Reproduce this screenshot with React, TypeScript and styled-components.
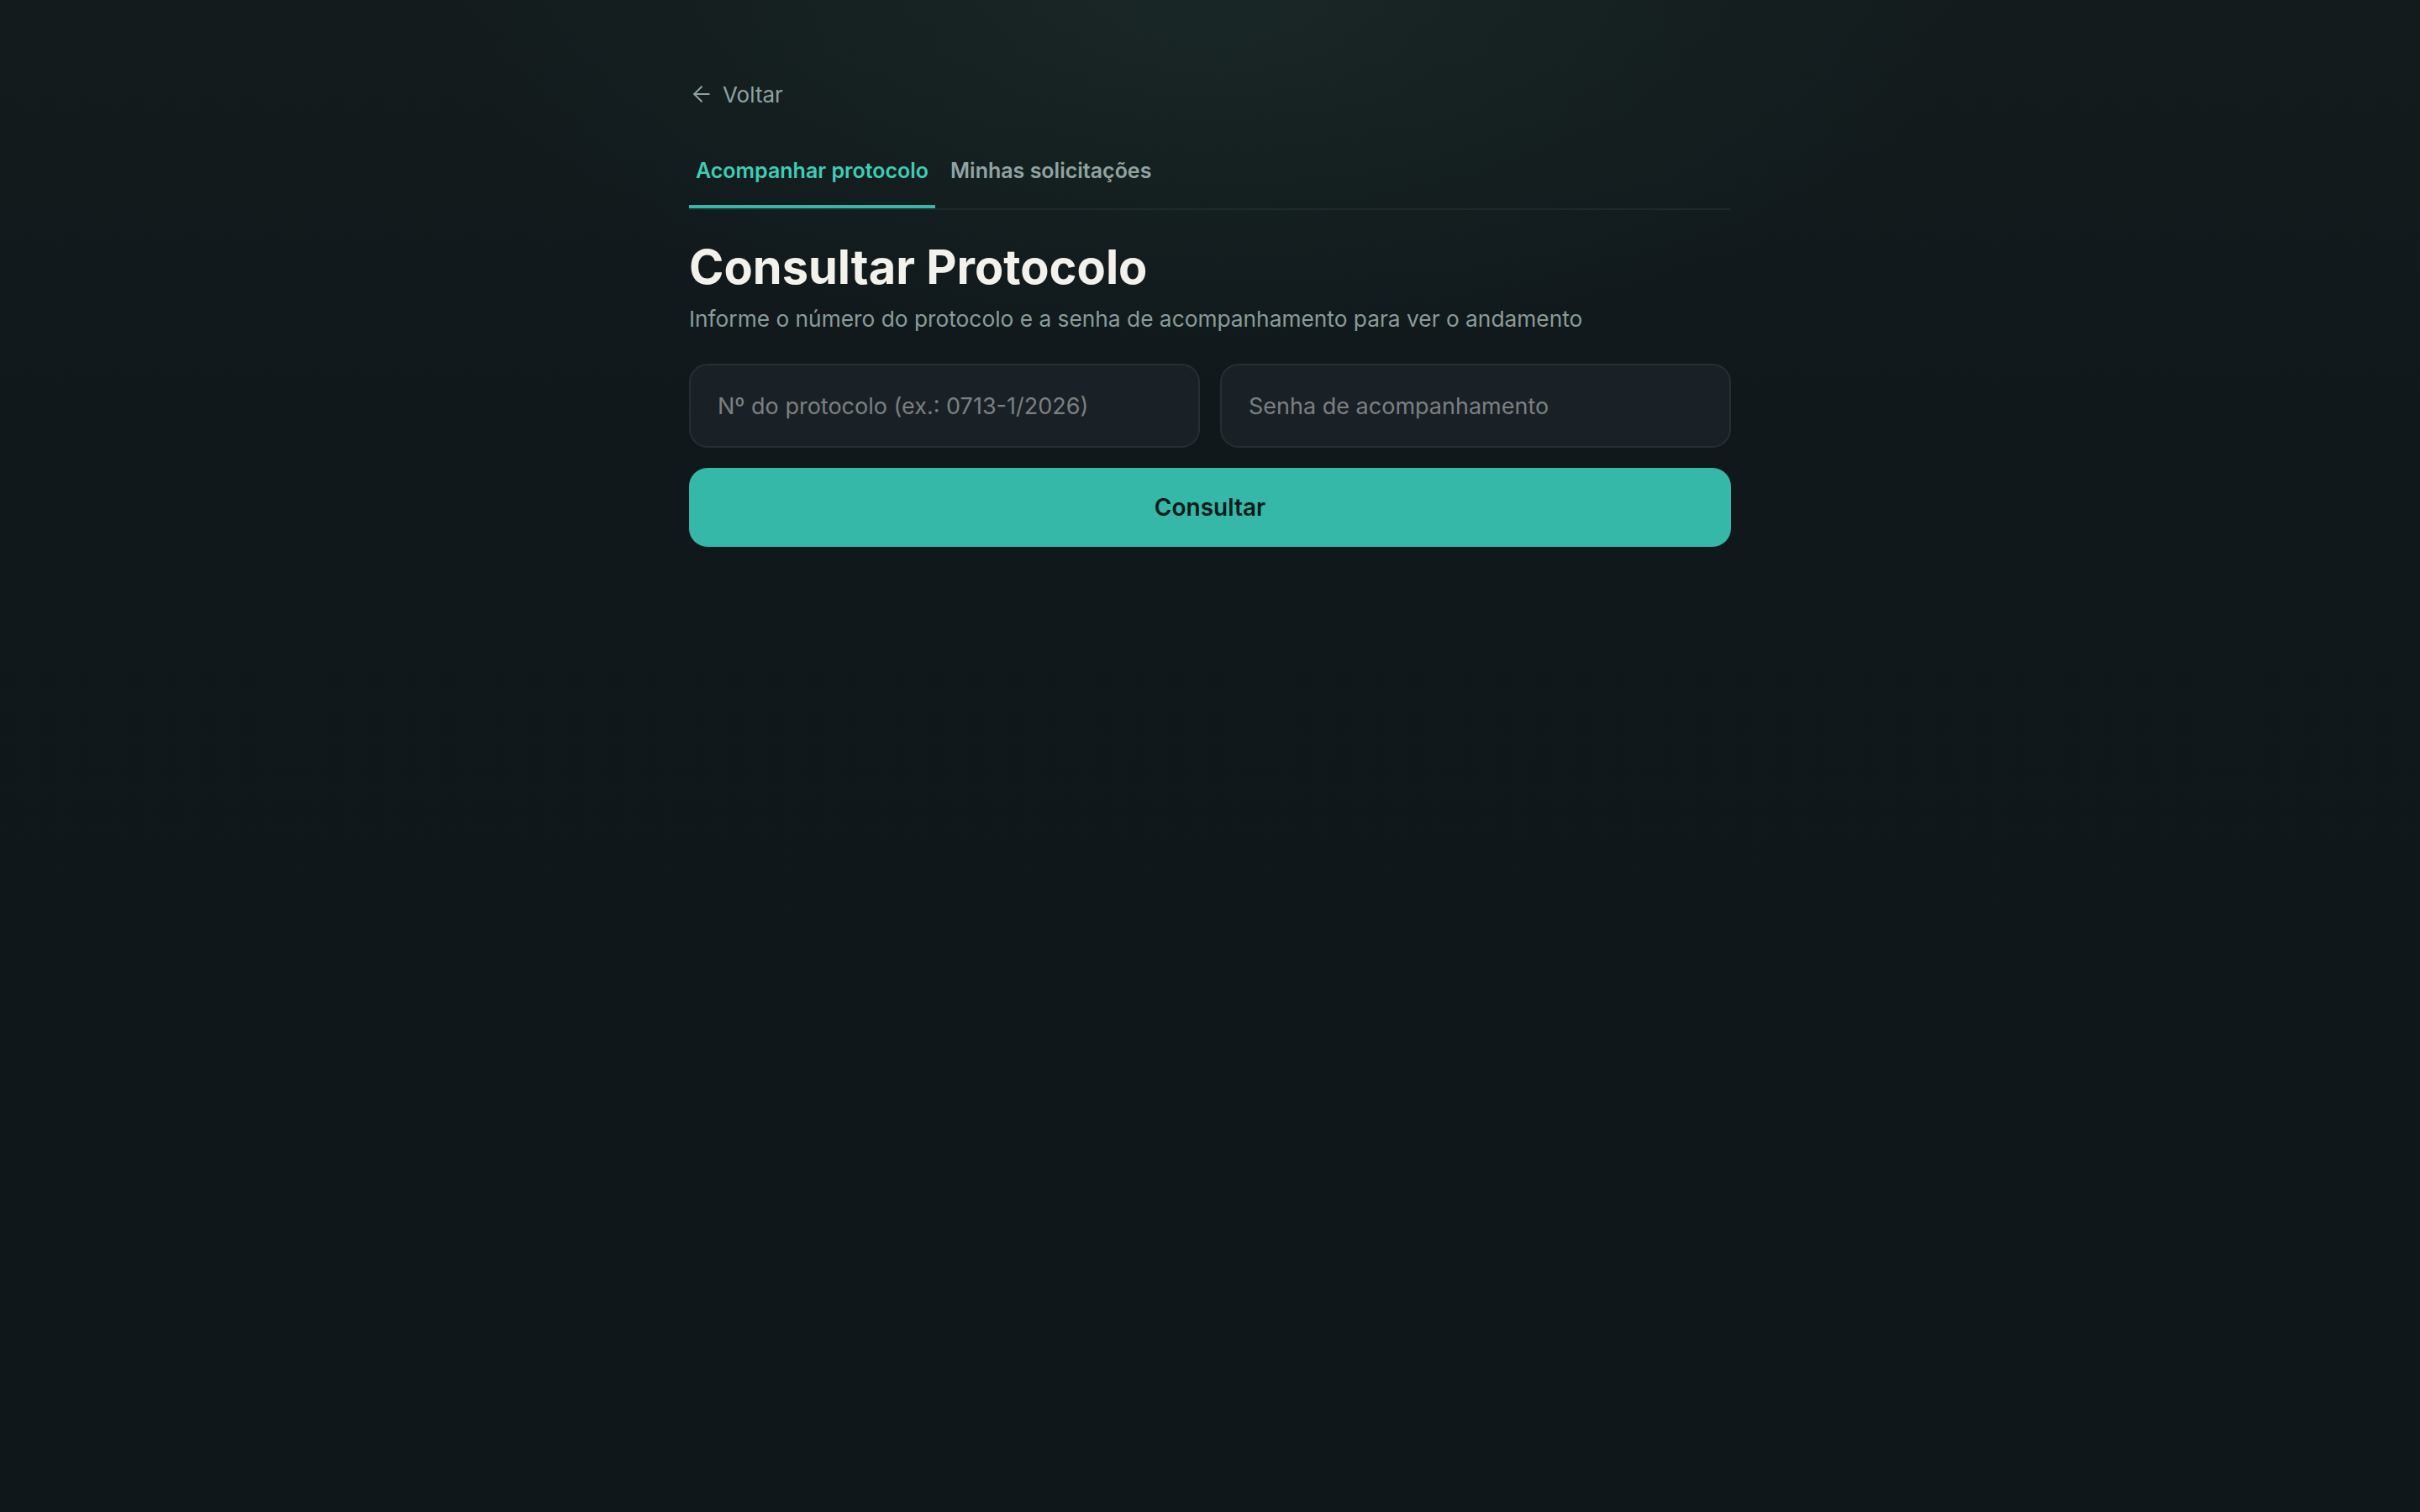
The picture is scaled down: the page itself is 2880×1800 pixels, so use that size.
import React from "react";
import styled, { createGlobalStyle } from "styled-components";
import { ArrowLeft } from "lucide-react";

const GlobalStyle = createGlobalStyle`
  html, body {
    margin: 0;
    padding: 0;
    min-height: 100%;
    background: #0f171a;
  }
  body {
    font-family: Inter, "Noto Sans", "Liberation Sans", sans-serif;
    -webkit-font-smoothing: antialiased;
  }
  * { box-sizing: border-box; }
`;

const Page = styled.div`
  min-height: 1800px;
  background:
    radial-gradient(ellipse 900px 420px at 50% 0%, rgba(40, 70, 60, 0.28), rgba(40, 70, 60, 0) 100%),
    linear-gradient(180deg, #131b1d 0%, #10181b 30%, #0f171a 100%);
  display: flex;
  justify-content: center;
`;

const Container = styled.main`
  width: 1240px;
  padding-top: 92px;
  display: flex;
  flex-direction: column;
`;

const BackLink = styled.a`
  display: inline-flex;
  align-items: center;
  gap: 10px;
  align-self: flex-start;
  height: 40px;
  color: #8fa2a0;
  font-size: 26px;
  font-weight: 400;
  text-decoration: none;
  cursor: pointer;
`;

const Tabs = styled.nav`
  margin-top: 36px;
  display: flex;
  gap: 10px;
  border-bottom: 2px solid #1d292b;
`;

const Tab = styled.button<{ $active?: boolean }>`
  background: none;
  border: none;
  padding: 15px 8px 21px;
  line-height: 40px;
  font-family: inherit;
  font-size: 25px;
  font-weight: 600;
  color: ${(p) => (p.$active ? "#3fcdb6" : "#91a4a2")};
  border-bottom: 4px solid ${(p) => (p.$active ? "#36b8a8" : "transparent")};
  cursor: pointer;
`;

const Heading = styled.h1`
  margin: 36px 0 0;
  font-size: 56px;
  line-height: 64px;
  font-weight: 700;
  color: #f2f1ec;
  letter-spacing: 0;
`;

const Subtitle = styled.p`
  margin: 10px 0 0;
  font-size: 26.3px;
  line-height: 40px;
  color: #8a9c9a;
`;

const Form = styled.form`
  margin-top: 33px;
  display: flex;
  flex-direction: column;
  gap: 24px;
`;

const Fields = styled.div`
  display: grid;
  grid-template-columns: 1fr 1fr;
  gap: 24px;
`;

const Input = styled.input`
  height: 100px;
  padding: 0 32px;
  border-radius: 22px;
  border: 2px solid #243033;
  background: #1a2126;
  color: #e6ecea;
  font-family: inherit;
  font-size: 27px;
  outline: none;
  &::placeholder {
    color: #7b8081;
  }
`;

const SubmitButton = styled.button`
  height: 94px;
  border: none;
  border-radius: 22px;
  background: #36b8a8;
  color: #0c1b19;
  font-family: inherit;
  font-size: 28px;
  font-weight: 600;
  cursor: pointer;
`;

export default function App() {
  return (
    <>
      <GlobalStyle />
      <Page>
        <Container>
          <BackLink>
            <ArrowLeft size={30} strokeWidth={1.6} />
            Voltar
          </BackLink>
          <Tabs>
            <Tab $active>Acompanhar protocolo</Tab>
            <Tab>Minhas solicitações</Tab>
          </Tabs>
          <Heading>Consultar Protocolo</Heading>
          <Subtitle>
            Informe o número do protocolo e a senha de acompanhamento para ver o andamento
          </Subtitle>
          <Form onSubmit={(e) => e.preventDefault()}>
            <Fields>
              <Input placeholder="Nº do protocolo (ex.: 0713-1/2026)" />
              <Input placeholder="Senha de acompanhamento" />
            </Fields>
            <SubmitButton type="submit">Consultar</SubmitButton>
          </Form>
        </Container>
      </Page>
    </>
  );
}
